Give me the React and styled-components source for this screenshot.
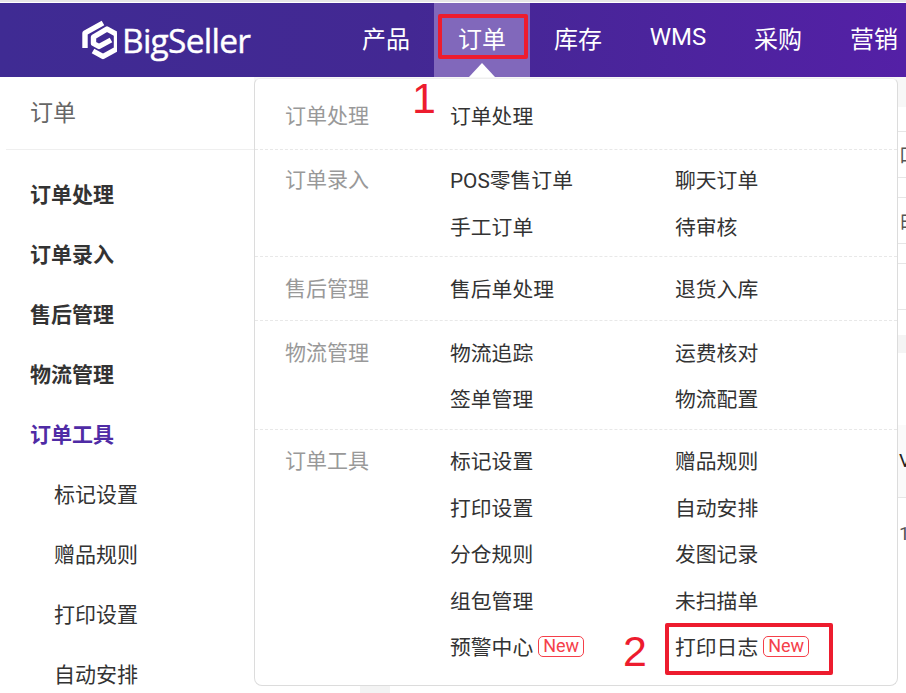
import React from "react";
import styled, { createGlobalStyle } from "styled-components";

const Global = createGlobalStyle`
  html, body { margin: 0; padding: 0; background: #fff; overflow: hidden; }
  body { font-family: Roboto, "Noto Sans CJK SC", sans-serif; color: #333; }
`;
const Page = styled.div`
  position: relative; width: 906px; height: 693px; overflow: hidden; background: #fff;
  border-top: 2px solid #e6e6e6; box-sizing: border-box;
  padding-top: 1px;
`;
const Nav = styled.header`
  display: flex; align-items: stretch; height: 74px; padding-left: 81px;
  background: linear-gradient(90deg, #3f2b93 0%, #432893 45%, #5420a6 100%);
`;
const Brand = styled.div`
  display: flex; align-items: center; gap: 5px; width: 257px; flex: none; color: #fff;
`;
const Wordmark = styled.span`
  font: 400 33.5px/1 "Open Sans", sans-serif; letter-spacing: -0.75px; position: relative; top: 1px;
  -webkit-text-stroke: 0.4px #fff;
`;
const NavItem = styled.div`
  position: relative; display: flex; align-items: center; justify-content: center; flex: none;
  width: ${p => p.$w}px; height: 74px; font-size: 24px; color: #fff;
  background: ${p => (p.$active ? "#8168bb" : "transparent")};
  padding-bottom: 6px; box-sizing: border-box; white-space: nowrap;
  ${p => p.$active && `&::after {
    content: ""; position: absolute; left: 50%; bottom: 0; transform: translateX(-50%);
    border: 13px solid transparent; border-top: 0; border-bottom: 14px solid #fff;
  }`}
`;
const Body = styled.div`
  display: flex; height: 616px;
`;
const Side = styled.aside`
  width: 254px; flex: none;
`;
const SideTitle = styled.div`
  height: 73px; padding: 17px 0 0 24px; margin-left: 6px; box-sizing: border-box;
  font-size: 23px; line-height: 40px; color: #666;
  border-bottom: 1px solid #efefef;
`;
const SideList = styled.div`
  display: flex; flex-direction: column; padding-top: 15px;
`;
const SideItem = styled.div`
  height: 60px; line-height: 60px; font-size: 21px; white-space: nowrap;
  padding-left: ${p => (p.$sub ? 54 : 30)}px;
  font-weight: ${p => (p.$sub ? 400 : 700)};
  color: ${p => (p.$accent ? "#4f2ba5" : "#333")};
`;
const Back = styled.div`
  flex: 1; display: flex; flex-direction: column; overflow: hidden;
`;
const BackRow = styled.div`
  flex: none; height: ${p => p.$h}px; line-height: ${p => p.$h}px; padding-left: 645px; box-sizing: border-box;
  background: ${p => p.$bg || "transparent"}; color: ${p => p.$c || "#555"}; font-size: 19px;
  border-top: ${p => (p.$line ? "1px solid #e6e6e6" : "none")};
  border-bottom: ${p => (p.$line === 2 ? "1px solid #e6e6e6" : "none")};
  overflow: hidden; white-space: nowrap;
`;
const Menu = styled.div`
  position: absolute; left: 254px; top: 76px; width: 644px; height: 608px; box-sizing: border-box;
  background: #fff; border: 1px solid #dcdcdc; border-top-color: #eee; border-radius: 6px 6px 8px 8px;
  display: flex; flex-direction: column; overflow: hidden;
`;
const Section = styled.section`
  display: flex; flex: none; padding: ${p => p.$pt}px 0 ${p => p.$pb}px 30px;
  border-bottom: ${p => (p.$last ? "none" : "1px dashed #e8e8e8")};
`;
const Label = styled.div`
  width: 165px; height: 46.5px; box-sizing: border-box; flex: none; padding-top: 1px;
  font-size: 21px; line-height: 47px; color: #999;
`;
const Items = styled.div`
  display: grid; grid-template-columns: 225px 200px; grid-auto-rows: 46.5px;
`;
const Item = styled.div`
  display: flex; align-items: center; gap: 5px; font-size: 20.8px; color: #333; white-space: nowrap;
`;
const Badge = styled.span`
  display: inline-flex; align-items: center; justify-content: center; width: 46px; height: 21px; box-sizing: border-box;
  border: 1px solid #f5404a; border-radius: 5px; color: #f5404a; font-size: 18px; line-height: 1;
`;
const Box = styled.div`
  position: absolute; left: ${p => p.$x}px; top: ${p => p.$y}px; width: ${p => p.$w}px; height: ${p => p.$h}px;
  border: 4px solid #ed1c2e; border-radius: 2px; box-sizing: border-box;
`;
const Mark = styled.div`
  position: absolute; left: ${p => p.$x}px; top: ${p => p.$y}px;
  color: #ed1c2e; font: 400 ${p => p.$s}px/1 "Liberation Sans", sans-serif;
`;
const Scrap = styled.div`
  position: absolute; left: 360px; top: 684px; width: 30px; height: 7px; background: #f3f3f3;
`;

const Logo = () => (
  <svg width="36" height="40" viewBox="3 2 36 40" fill="none" stroke="#fff" strokeWidth="5.4" strokeLinejoin="round" strokeLinecap="butt">
    <path d="M25 5 7 15V30" />
    <path d="M38 16 29 11 15.500 19V25.500L21 28.500 33 22" />
    <path d="M38.500 14.500V31L25 38.500 15 33" />
  </svg>
);

const rows = [
  { l: "订单处理", pt: 13, pb: 10, items: [["订单处理"]] },
  { l: "订单录入", pt: 6.5, pb: 7, items: [["POS零售订单"], ["聊天订单"], ["手工订单"], ["待审核"]] },
  { l: "售后管理", pt: 8, pb: 8.5, items: [["售后单处理"], ["退货入库"]] },
  { l: "物流管理", pt: 7.5, pb: 7.5, items: [["物流追踪"], ["运费核对"], ["签单管理"], ["物流配置"]] },
  { l: "订单工具", pt: 7, pb: 0, last: true, items: [["标记设置"], ["赠品规则"], ["打印设置"], ["自动安排"], ["分仓规则"], ["发图记录"], ["组包管理"], ["未扫描单"], ["预警中心", 1], ["打印日志", 1]] },
];
const nav = [["产品", 0, 96], ["订单", 1, 96], ["库存", 0, 96], ["WMS", 0, 104], ["采购", 0, 96], ["营销", 0, 96]];
const side = [["订单处理"], ["订单录入"], ["售后管理"], ["物流管理"], ["订单工具", 0, 1], ["标记设置", 1], ["赠品规则", 1], ["打印设置", 1], ["自动安排", 1]];

export default function App() {
  return (
    <Page>
      <Global />
      <Nav>
        <Brand><Logo /><Wordmark>BigSeller</Wordmark></Brand>
        {nav.map(([t, a, w]) => <NavItem key={t} $active={!!a} $w={w}>{t}</NavItem>)}
      </Nav>
      <Body>
        <Side>
          <SideTitle>订单</SideTitle>
          <SideList>
            {side.map(([t, s, acc]) => <SideItem key={t} $sub={!!s} $accent={!!acc}>{t}</SideItem>)}
          </SideList>
        </Side>
        <Back>
          <BackRow $h={30} $bg="#f7f7f7" />
          <BackRow $h={24} />
          <BackRow $h={47} $line={2}>口</BackRow>
          <BackRow $h={19} />
          <BackRow $h={47} $line={2}>白</BackRow>
          <BackRow $h={19} />
          <BackRow $h={47} $line={2} />
          <BackRow $h={25} />
          <BackRow $h={18} $bg="#f4f4f4" />
          <BackRow $h={72} />
          <BackRow $h={72} $bg="#fafafa" $c="#222">VA</BackRow>
          <BackRow $h={72} $line={1}>1</BackRow>
        </Back>
      </Body>
      <Menu>
        {rows.map(r => (
          <Section key={r.l} $pt={r.pt} $pb={r.pb} $last={r.last}>
            <Label>{r.l}</Label>
            <Items>
              {r.items.map(([t, n]) => <Item key={t}>{t}{n ? <Badge>New</Badge> : null}</Item>)}
            </Items>
          </Section>
        ))}
      </Menu>
      <Scrap />
      <Box $x={438} $y={12} $w={90} $h={45} />
      <Box $x={665} $y={621} $w={168} $h={52} />
      <Mark $x={412} $y={75} $s={43}>1</Mark>
      <Mark $x={623} $y={628} $s={43}>2</Mark>
    </Page>
  );
}
